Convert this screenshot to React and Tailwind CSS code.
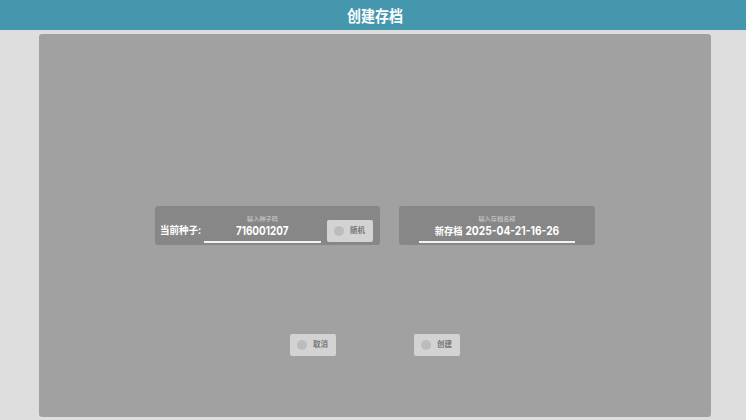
const FONT = "font-['Inter','Noto_Sans_CJK_SC',sans-serif]"

function Btn({ label }) {
  return (
    <button className="flex h-[22px] w-[46px] items-center rounded-[2px] bg-[#d3d3d3] pl-[7px]">
      <span className="h-[10px] w-[10px] rounded-full bg-[#bcbcbc]" />
      <span className="ml-[6px] text-[7.5px] leading-none font-bold text-[#777777]">{label}</span>
    </button>
  )
}

function Field({ hint, zh, value, className }) {
  return (
    <div className={`flex flex-col items-center ${className}`}>
      <span className="mt-[9px] h-[8px] text-[6.2px] leading-[8px] font-bold text-[#bdbdbd]">{hint}</span>
      <span className={`mt-[1px] flex h-[14px] origin-center scale-y-[1.05] items-center gap-[3px] text-[11px] leading-[14px] font-bold whitespace-nowrap text-white ${zh ? 'scale-x-[0.93]' : 'scale-x-[0.9]'}`}>
        {zh && <span className="text-[10px]">{zh}</span>}
        <span>{value}</span>
      </span>
      <span className="mt-[3px] h-[2px] w-full bg-[#f2f2f2]" />
    </div>
  )
}

export default function App() {
  return (
    <div className={`flex h-[420px] w-[746px] flex-col overflow-hidden bg-[#dedede] ${FONT}`}>
      <header className="flex h-[30px] shrink-0 items-center justify-center bg-[#4497ad] pl-[4px] text-white">
        <span className="scale-y-[1.1] text-[14px] font-bold">创建存档</span>
      </header>
      <main className="mt-[4px] ml-[39px] flex h-[383px] w-[672px] flex-col items-center rounded-[3px] bg-[#a1a1a1] pt-[172px]">
        <div className="flex gap-[19px]">
          <div className="flex h-[39px] w-[225px] rounded-[3px] bg-[#878787] pl-[5px]">
            <span className="mt-[18px] w-[44px] scale-y-[1.1] text-[9.5px] leading-[14px] font-bold whitespace-nowrap text-white">当前种子:</span>
            <Field hint="输入种子码" value="716001207" className="w-[117px]" />
            <div className="mt-[14px] ml-[6px]">
              <Btn label="随机" />
            </div>
          </div>
          <div className="flex h-[39px] w-[196px] justify-center rounded-[3px] bg-[#878787]">
            <Field hint="输入存档名称" zh="新存档" value="2025-04-21-16-26" className="w-[156px]" />
          </div>
        </div>
        <div className="mt-[89px] flex gap-[78px]">
          <Btn label="取消" />
          <Btn label="创建" />
        </div>
      </main>
    </div>
  )
}
